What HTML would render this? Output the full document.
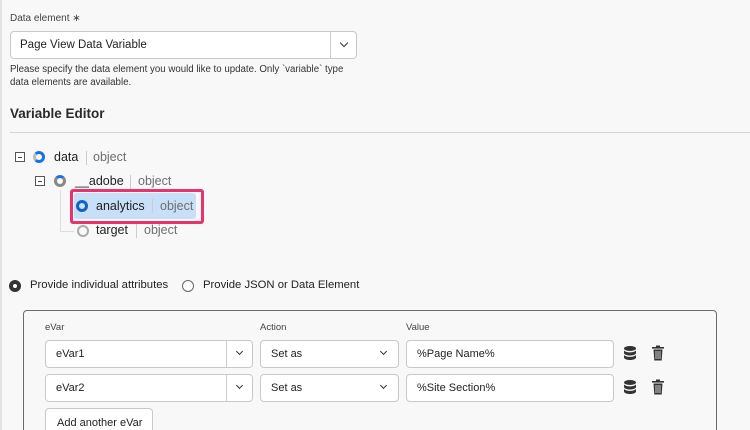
<!DOCTYPE html>
<html><head><style>
*{box-sizing:border-box;margin:0;padding:0}
html,body{width:750px;height:430px;overflow:hidden}
body{background:#f8f8f8;font-family:"Liberation Sans",sans-serif;color:#2c2c2c;position:relative}
.a{position:absolute;white-space:nowrap}
.sel{position:absolute;background:#fff;border:1px solid #c9c9c9;border-radius:4px;font-size:11px;color:#222}
.chev{position:absolute;width:6px;height:6px;border-right:1.6px solid #333;border-bottom:1.6px solid #333;transform:rotate(45deg)}
.pm{position:absolute;width:10px;height:10px;border:1px solid #555;background:#fff}
.pm:after{content:"";position:absolute;left:2px;top:3.5px;width:4px;height:1px;background:#444}
.ring{position:absolute;width:12px;height:12px;border-radius:50%;border:3px solid #1473e6}
.t{font-size:12.5px;color:#222}
.ty{font-size:12.5px;color:#6e6e6e}
.sep{position:absolute;width:1px;height:14px;background:#ccc}
</style></head><body>
<div class="a" style="left:0;top:0;width:2px;height:430px;background:#e2e2e2"></div>
<div class="a" style="left:10px;top:13px;font-size:10px;color:#444">Data element ∗</div>
<div class="sel" style="left:10px;top:31px;width:347px;height:28px"><span class="a" style="left:9px;top:7px;font-size:11.5px">Page View Data Variable</span><div class="a" style="left:319px;top:0;width:1px;height:26px;background:#ccc"></div><div class="chev" style="left:330px;top:8px"></div></div>
<div class="a" style="left:10px;top:63px;font-size:9.7px;color:#333;line-height:13px">Please specify the data element you would like to update. Only `variable` type<br>data elements are available.</div>
<div class="a" style="left:10px;top:106px;font-size:13.5px;font-weight:bold;color:#2a2a2a">Variable Editor</div>
<div class="a" style="left:10px;top:132px;width:740px;height:1px;background:#d5d5d5"></div>

<div class="pm" style="left:15px;top:152px"></div>
<div class="ring" style="left:33px;top:151px;border-color:#1473e6 #1473e6 #1473e6 #bbb"></div>
<div class="a t" style="left:54px;top:150px">data</div><div class="sep" style="left:86px;top:151px"></div><div class="a ty" style="left:93px;top:150px">object</div>

<div class="pm" style="left:35px;top:176px"></div>
<div class="ring" style="left:54px;top:175px;border-color:#1473e6 #888 #888 #888"></div>
<div class="a t" style="left:75px;top:174px">__adobe</div><div class="sep" style="left:130px;top:175px"></div><div class="a ty" style="left:138px;top:174px">object</div>
<div class="a" style="left:60px;top:190px;width:1px;height:42px;background:#ddd"></div>
<div class="a" style="left:60px;top:231px;width:14px;height:1px;background:#ddd"></div>

<div class="a" style="left:70px;top:189px;width:134px;height:35px;border:3px solid #e8336d;border-radius:3px"></div>
<div class="a" style="left:74px;top:193px;width:122px;height:26px;background:#c7e0f8;border-radius:3px"></div>
<div class="ring" style="left:76px;top:200px;border-color:#1062c8"></div>
<div class="a t" style="left:96px;top:199px">analytics</div><div class="sep" style="left:152px;top:199px"></div><div class="a ty" style="left:160px;top:199px">object</div>

<div class="ring" style="left:77px;top:225px;border-color:#aaa;border-width:2.5px"></div>
<div class="a t" style="left:96px;top:223px">target</div><div class="sep" style="left:136px;top:224px"></div><div class="a ty" style="left:144px;top:223px">object</div>

<div class="a" style="left:9px;top:280px;width:12px;height:12px;border-radius:50%;border:4px solid #333;background:#fff"></div>
<div class="a" style="left:30px;top:279px;font-size:11.3px;color:#222">Provide individual attributes</div>
<div class="a" style="left:182px;top:280px;width:12px;height:12px;border-radius:50%;border:1.5px solid #666;background:#fff"></div>
<div class="a" style="left:203px;top:279px;font-size:11.3px;color:#222">Provide JSON or Data Element</div>

<div class="a" style="left:23px;top:310px;width:694px;height:140px;border:1px solid #6b6b6b;border-radius:4px"></div>
<div class="a" style="left:45px;top:322px;font-size:9.5px;color:#444">eVar</div>
<div class="a" style="left:260px;top:322px;font-size:9.5px;color:#444">Action</div>
<div class="a" style="left:406px;top:322px;font-size:9.5px;color:#444">Value</div>

<div class="sel" style="left:45px;top:340px;width:208px;height:28px"><span class="a" style="left:10px;top:7px">eVar1</span><div class="a" style="left:180px;top:0;width:1px;height:26px;background:#ccc"></div><div class="chev" style="left:191px;top:8px;width:5px;height:5px"></div></div>
<div class="sel" style="left:260px;top:340px;width:139px;height:28px"><span class="a" style="left:10px;top:7px">Set as</span><div class="chev" style="left:120px;top:8px;width:5px;height:5px"></div></div>
<div class="sel" style="left:406px;top:340px;width:208px;height:28px"><span class="a" style="left:10px;top:7px">%Page Name%</span></div>

<div class="sel" style="left:45px;top:374px;width:208px;height:28px"><span class="a" style="left:10px;top:7px">eVar2</span><div class="a" style="left:180px;top:0;width:1px;height:26px;background:#ccc"></div><div class="chev" style="left:191px;top:8px;width:5px;height:5px"></div></div>
<div class="sel" style="left:260px;top:374px;width:139px;height:28px"><span class="a" style="left:10px;top:7px">Set as</span><div class="chev" style="left:120px;top:8px;width:5px;height:5px"></div></div>
<div class="sel" style="left:406px;top:374px;width:208px;height:28px"><span class="a" style="left:10px;top:7px">%Site Section%</span></div>

<svg class="a" style="left:622px;top:345px" width="16" height="16" viewBox="0 0 16 16"><ellipse cx="8" cy="3.5" rx="6" ry="2.5" fill="#333"/><path d="M2 5.5v2.5c0 1.4 2.7 2.5 6 2.5s6-1.1 6-2.5V5.5c-1 1.2-3.4 1.9-6 1.9S3 6.7 2 5.5zM2 10v2.5C2 13.9 4.7 15 8 15s6-1.1 6-2.5V10c-1 1.2-3.4 1.9-6 1.9S3 11.2 2 10z" fill="#333"/></svg>
<svg class="a" style="left:651px;top:345px" width="14" height="16" viewBox="0 0 14 16"><rect x="1" y="2" width="12" height="1.6" fill="#333"/><rect x="5" y="0.5" width="4" height="2" fill="#333"/><path d="M2.5 4.5h9l-.8 11H3.3z" fill="#333"/><path d="M5 6v8M7 6v8M9 6v8" stroke="#f8f8f8" stroke-width=".8"/></svg>
<svg class="a" style="left:622px;top:379px" width="16" height="16" viewBox="0 0 16 16"><ellipse cx="8" cy="3.5" rx="6" ry="2.5" fill="#333"/><path d="M2 5.5v2.5c0 1.4 2.7 2.5 6 2.5s6-1.1 6-2.5V5.5c-1 1.2-3.4 1.9-6 1.9S3 6.7 2 5.5zM2 10v2.5C2 13.9 4.7 15 8 15s6-1.1 6-2.5V10c-1 1.2-3.4 1.9-6 1.9S3 11.2 2 10z" fill="#333"/></svg>
<svg class="a" style="left:651px;top:379px" width="14" height="16" viewBox="0 0 14 16"><rect x="1" y="2" width="12" height="1.6" fill="#333"/><rect x="5" y="0.5" width="4" height="2" fill="#333"/><path d="M2.5 4.5h9l-.8 11H3.3z" fill="#333"/><path d="M5 6v8M7 6v8M9 6v8" stroke="#f8f8f8" stroke-width=".8"/></svg>

<div class="a" style="left:45px;top:408px;width:108px;height:30px;background:#fff;border:1px solid #c9c9c9;border-radius:4px;font-size:11px;color:#222;padding:8px 0 0 11px">Add another eVar</div>
</body></html>
